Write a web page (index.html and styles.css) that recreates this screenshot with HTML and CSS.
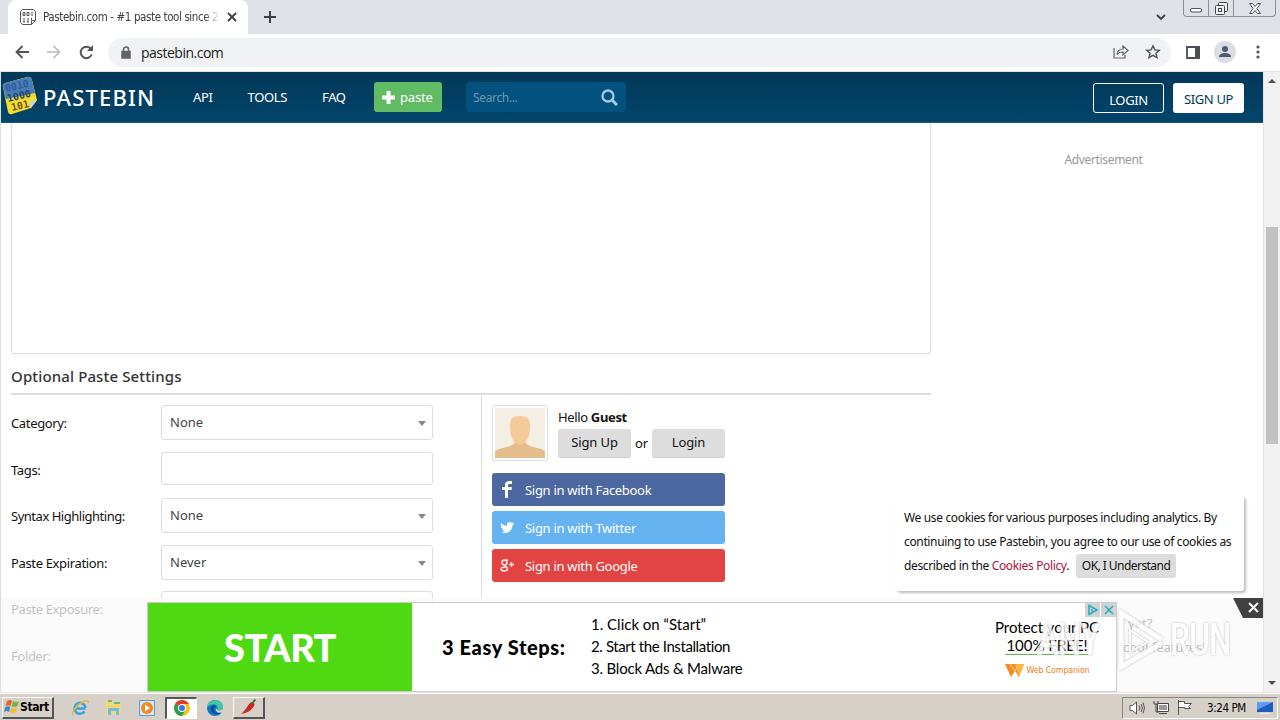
FILE: index.html
```
<!DOCTYPE html>
<html lang="en">
<head>
    <meta charset="UTF-8">
    <meta name="viewport" content="width=device-width, initial-scale=1.0">
    <title>Pastebin.com - #1 paste tool since 2002!</title>
    <link rel="stylesheet" href="styles.css">
</head>
<body>

    <!-- Browser tabs -->
    <div class="tab-bar">
        <div class="tab">
            <svg class="favicon" width="16" height="16" viewBox="0 0 16 16" fill="none" stroke="#555">
                <path d="M2.500 .5h11l2 2v9l-4 4h-9l-2-2v-11z"/>
                <path d="M3 3.500h2v3H3zM7 3.500h2v3H7zM12 3v4M4 9v4M8 9v4M11.500 9v2M3 13h2M7 13h2M15 11.500h-3.500V15"/>
            </svg>
            <span class="tab-title">Pastebin.com - #1 paste tool since 2</span>
            <svg width="10" height="10" viewBox="0 0 10 10" stroke="#3c4043" stroke-width="1.800"><path d="M1 1l8 8M9 1L1 9"/></svg>
        </div>
        <svg class="new-tab" width="12" height="12" viewBox="0 0 12 12" stroke="#3c4043" stroke-width="2"><path d="M6 0v12M0 6h12"/></svg>
        <svg class="tab-search" width="10" height="7" viewBox="0 0 10 7" fill="none" stroke="#3c4043" stroke-width="1.800"><path d="M1 1l4 4 4-4"/></svg>
        <div class="window-buttons">
            <span class="win-min"><svg width="13" height="5" viewBox="0 0 13 5" fill="#fff" stroke="#555"><rect x=".5" y=".5" width="11" height="3.500" rx="1.500"/></svg></span>
            <span class="win-max"><svg width="13" height="13" viewBox="0 0 13 13" fill="#eef0f3" stroke="#444"><rect x="3.500" y=".5" width="9" height="9" rx="1"/><rect x=".5" y="3.500" width="9" height="9" rx="1"/><rect x="3.500" y="6.500" width="3" height="3"/></svg></span>
            <span class="win-close"><svg width="12" height="11" viewBox="0 0 12 11" fill="#fff" stroke="#555"><path d="M.5.5h3L6 3.500 8.500.5h3L8 5.500l3.500 5h-3L6 7.500l-2.500 3h-3L4 5.500z"/></svg></span>
        </div>
    </div>

    <!-- Address bar -->
    <div class="toolbar">
        <svg width="14" height="14" viewBox="0 0 14 14" fill="none" stroke="#505357" stroke-width="1.900"><path d="M14 7H1.500M7.500 1l-6 6 6 6"/></svg>
        <svg class="forward" width="14" height="14" viewBox="0 0 14 14" fill="none" stroke="#b9bbbe" stroke-width="1.700"><path d="M0 7h12.500M6.500 1l6 6-6 6"/></svg>
        <svg class="reload" width="15" height="15" viewBox="0 0 15 15" fill="none" stroke="#505357" stroke-width="2"><path d="M12.700 9.500A5.700 5.700 0 1 1 11.500 3.500"/><path d="M14 0v6H8z" fill="#505357" stroke="none"/></svg>
        <div class="address">
            <svg width="10" height="13" viewBox="0 0 10 13" fill="none" stroke="#5f6368" stroke-width="1.500"><rect x="1" y="5.500" width="8" height="6.500" fill="#5f6368"/><path d="M2.500 5V3.500a2.500 2.500 0 0 1 5 0V5"/></svg>
            <span class="url">pastebin.com</span>
            <svg class="share" width="16" height="14" viewBox="0 0 16 14" fill="none" stroke="#5f6368" stroke-width="1.200"><path d="M1 3v10h11v-3M4 9.500C4.500 6 6.500 4 10 4V1l5 4.500L10 10V7C7.500 7 5.500 7.500 4 9.500z"/></svg>
            <svg width="16" height="16" viewBox="0 0 16 16" fill="none" stroke="#505357" stroke-width="1.400"><path d="M8 1.800l1.900 4.100 4.400.4-3.300 3 1 4.300-4-2.300-4 2.300 1-4.300-3.300-3 4.400-.4z"/></svg>
        </div>
        <svg class="side-panel" width="14" height="13" viewBox="0 0 14 13"><path d="M1 1h12v11H1z" fill="none" stroke="#4b4e52" stroke-width="1.800"/><path d="M9 1h5v11H9z" fill="#4b4e52"/></svg>
        <svg class="profile" width="22" height="22" viewBox="0 0 22 22"><circle cx="11" cy="11" r="11" fill="#dadde2"/><circle cx="11" cy="8" r="3" fill="#4c5a75"/><path d="M5 16c0-3 3-4 6-4s6 1 6 4z" fill="#4c5a75"/></svg>
        <svg class="menu-dots" width="4" height="14" viewBox="0 0 4 14" fill="#505357"><circle cx="2" cy="2" r="1.600"/><circle cx="2" cy="7" r="1.600"/><circle cx="2" cy="12" r="1.600"/></svg>
    </div>

    <div class="viewport">
        <div class="page">
            <header class="header">
                <svg class="logo" width="38" height="40" viewBox="0 0 38 40">
                    <path d="M2 11Q1 8 4 7L26 1q4-1 5 3l5 20-6 8-19 6q-3 1-4-2z" fill="#f3dc2c"/>
                    <path d="M2 11Q1 8 4 7L26 1q4-1 5 3l3 13L5 23z" fill="#4a7cba"/>
                    <path d="M36 24l-8 2 2 6z" fill="#c9d3d5"/>
                    <g class="logo-digits">
                        <text x="5" y="16" transform="rotate(-13 5 16)" fill="#315e96">0010</text>
                        <text x="7" y="26" transform="rotate(-13 7 26)" fill="#25486b">1000</text>
                        <text x="11" y="35" transform="rotate(-13 11 35)" fill="#6b551a">101</text>
                    </g>
                </svg>
                <span class="brand">PASTEBIN</span>
                <nav class="nav">
                    <a>API</a>
                    <a>TOOLS</a>
                    <a>FAQ</a>
                </nav>
                <a class="paste-btn">
                    <svg width="13" height="13" viewBox="0 0 13 13" stroke="#fff" stroke-width="4"><path d="M6.500 0v13M0 6.500h13"/></svg>
                    <span>paste</span>
                </a>
                <div class="search">
                    <span>Search...</span>
                    <svg width="17" height="17" viewBox="0 0 17 17" fill="none" stroke="#a3cbe3"><circle cx="7" cy="7" r="5.500" stroke-width="2.300"/><path d="M11 11l5 5" stroke-width="3"/></svg>
                </div>
                <a class="head-btn login">LOGIN</a>
                <a class="head-btn signup">SIGN UP</a>
            </header>

            <div class="content">
                <div class="main">
                    <div class="paste-text"></div>
                    <h2>Optional Paste Settings</h2>
                    <div class="columns">
                        <div class="settings">
                            <div class="row"><label>Category:</label><div class="select">None</div></div>
                            <div class="row"><label>Tags:</label><div class="select input"></div></div>
                            <div class="row"><label class="long">Syntax Highlighting:</label><div class="select">None</div></div>
                            <div class="row"><label>Paste Expiration:</label><div class="select">Never</div></div>
                            <div class="row"><label>Paste Exposure:</label><div class="select"></div></div>
                            <div class="row"><label>Folder:</label></div>
                        </div>
                        <div class="account">
                            <div class="guest">
                                <div class="avatar">
                                    <svg width="50" height="50" viewBox="0 0 50 50"><path d="M0 0h50v50H0z" fill="#f5eee4"/><path d="M0 50v-6c1-4 12-4 17-7 2-1 3-2 3-6h10c0 4 1 5 3 6 5 3 16 3 17 7v6z" fill="#e5bc8c"/><path d="M15 19c-1-8 3-11 10-11s11 3 10 11c0 9-3 17-10 18-7-1-10-9-10-18z" fill="#f2cb98"/></svg>
                                </div>
                                <div>
                                    <p class="hello">Hello <b>Guest</b></p>
                                    <div class="guest-btns"><a class="grey-btn">Sign Up</a><span>or</span><a class="grey-btn">Login</a></div>
                                </div>
                            </div>
                            <a class="social facebook">
                                <svg width="30" height="33" viewBox="0 0 30 33" fill="#fff"><path d="M13 25v-8h-3v-3h3v-2c0-3 2-4 5-4h2v3h-2c-1 0-2 0-2 1v2h4l-.5 3H16v8z"/></svg>
                                <span>Sign in with Facebook</span>
                            </a>
                            <a class="social twitter">
                                <svg width="30" height="33" viewBox="0 0 30 33" fill="#fff"><path d="M9 12c2 2 4 3 6 3-.5-4 3-5 5-3l2-.6-1 1.600 1 .2-1.500 1.500C20 20 15 24 9 21c1.500 0 3-.3 4-1-1.500 0-2.500-1-3-2h1.500c-1.500-.5-2.500-1.500-2.500-3l1 .3c-1.500-1-1.500-2-1-3.300z"/></svg>
                                <span>Sign in with Twitter</span>
                            </a>
                            <a class="social google">
                                <svg width="30" height="33" viewBox="0 0 30 33" fill="none" stroke="#fbe3e2" stroke-width="1.500"><circle cx="12.500" cy="13.500" r="2.500"/><path d="M12 11h4M12.500 16c0 1.500 3 1.500 3 4s-6.500 2.500-6.500 0c0-2 3-2 5-2M17 15.500h5M19.500 13v5"/></svg>
                                <span>Sign in with Google</span>
                            </a>
                        </div>
                    </div>
                </div>
                <aside class="sidebar">Advertisement</aside>
            </div>

            <div class="cookies">
                <span>We use cookies for various purposes including analytics. By</span><br>
                <span>continuing to use Pastebin, you agree to our use of cookies as</span><br>
                <span>described in the <a>Cookies Policy</a>.</span> <span class="ok">OK, I Understand</span>
            </div>

            <!-- Bottom ad -->
            <div class="ad-strip">
                <div class="ad">
                    <div class="ad-start">START</div>
                    <div class="ad-title">3 Easy Steps:</div>
                    <div class="ad-steps">
                        <div>1. Click on “Start”</div>
                        <div class="install">2. Start the Installation</div>
                        <div class="block">3. Block Ads &amp; Malware</div>
                    </div>
                    <div class="ad-brand">
                        <div class="protect">Protect your PC</div>
                        <div class="free">100% FREE!</div>
                        <div class="companion">
                            <svg width="19" height="13" viewBox="0 0 19 13"><path d="M0 0h19l-5 13-4-6-4 6z" fill="#f68b1e"/><path d="M10 0h9l-5 13z" fill="#fdb53c"/><path d="M5 0l5 7 3-5" fill="none" stroke="#fff" stroke-width=".6"/></svg>
                            <span>Web Companion</span>
                        </div>
                    </div>
                    <svg class="ad-choices" width="31" height="14" viewBox="0 0 31 14" fill="none" stroke="#25aab8" stroke-width="1.500"><path d="M0 0h15v14H0zM16 0h15v14H16z" fill="#cfd3d5" stroke="none"/><path d="M4 2.500l8 4.500-8 4.500zM7 6v2.500M20 3l8 8M28 3l-8 8"/></svg>
                </div>
                <span class="behind b1">yet?</span>
                <span class="behind b2">cool features!</span>
                <svg class="ad-close" width="31" height="20" viewBox="0 0 31 20"><path d="M0 0h31v20H10z" fill="#414141"/><path d="M16 5l9 9M25 5l-9 9" stroke="#fff" stroke-width="2"/></svg>
            </div>

            <div class="watermark">
                <span class="any">ANY</span>
                <svg width="52" height="64" viewBox="0 0 52 64" fill="none" stroke="#fff" stroke-width="5"><path d="M5 36V5l41 27"/><path d="M5 36v23l41-24"/><path d="M14 22v22l18-10z" stroke-width="2"/></svg>
                <span class="run">RUN</span>
            </div>
        </div>

        <div class="scrollbar">
            <svg width="8" height="4" viewBox="0 0 8 4" fill="#505050"><path d="M4 0l4 4H0z"/></svg>
            <div class="thumb"></div>
            <svg class="down" width="8" height="4" viewBox="0 0 8 4" fill="#505050"><path d="M0 0h8L4 4z"/></svg>
        </div>
    </div>

    <!-- Taskbar -->
    <div class="taskbar">
        <div class="start">
            <svg width="16" height="16" viewBox="0 0 16 16"><path d="M3 2q3-2 5 0L6.500 7q-2-1.500-5 0z" fill="#e8622c"/><path d="M9 2q3 2 6 0l-1.500 5q-3 2-6 0z" fill="#72b840"/><path d="M1.300 8q3-1.500 5 0L5 13q-2-2-5 0z" fill="#3e83d0"/><path d="M7.300 8.500q3 2 6 0L12 13q-3 2-6 0z" fill="#f6bd29"/></svg>
            <b>Start</b>
        </div>
        <svg class="ie" width="18" height="18" viewBox="0 0 18 18" fill="none"><path d="M14.500 9.500H4M13.500 12.500A5.500 5.500 0 1 1 14.500 9" stroke="#35a3dd" stroke-width="2.500"/><path d="M2 16c-2-2 3-9 8-12s8-3 7 0" stroke="#e5b93a" stroke-width="1.500"/></svg>
        <svg class="folder" width="17" height="17" viewBox="0 0 17 17"><path d="M1 2h6l1 2h8v11H1z" fill="#f4d67a"/><path d="M3 1h4v2H3zM9 3h6v2H9z" fill="#73b76b"/><path d="M3 16V9h11v7h-3v-4H6v4z" fill="#71bde1"/></svg>
        <svg class="wmp" width="16" height="16" viewBox="0 0 16 16"><path d="M.5.500h15v15H.5z" fill="#d5e7f4" stroke="#5b9dcc"/><circle cx="8" cy="8" r="6" fill="#f28a1b"/><path d="M6 4.500l5 3.500-5 3.500z" fill="#fff"/></svg>
        <div class="task active">
            <svg width="16" height="16" viewBox="0 0 16 16"><circle cx="8" cy="8" r="8" fill="#fbc116"/><path d="M8 8L1.100 4A8 8 0 0 1 14.900 4H8z" fill="#e33b2e"/><path d="M1.100 4A8 8 0 0 0 8 16l3.500-6L8 8z" fill="#27a350"/><circle cx="8" cy="8" r="4" fill="#fff"/><circle cx="8" cy="8" r="3" fill="#3b78e7"/></svg>
        </div>
        <svg class="edge" width="16" height="16" viewBox="0 0 16 16"><circle cx="8" cy="8" r="8" fill="#1675c8"/><path d="M0 7C1-2 16-2 16 7c0 4-5 4-6 2 2-3-2-6-6-4-2 1-3 1-4 2z" fill="#40c9a0"/><path d="M7 8c-1 4 3 6 7 4l-1 2C7 15 3 12 4 8c1-3 4-3 5-1z" fill="#0d4d91"/><path d="M9 8c1 3 4 3 7 1v3c-4 2-8 0-7-4z" fill="#d6d0c8"/></svg>
        <div class="task chili">
            <svg width="18" height="18" viewBox="0 0 18 18"><path d="M10 5c2-2 6 0 4 3-3 5-7 7-13 8 5-4 6-8 9-11z" fill="#c92828"/><path d="M12.500 6c0-2 1-3 3-4.500" fill="none" stroke="#3c7a2b" stroke-width="2"/></svg>
        </div>
        <div class="tray">
            <svg width="16" height="14" viewBox="0 0 16 14" fill="#fff" stroke="#555"><path d="M1 4.500h2.500l4-3.500v12l-4-3.500H1z"/><path d="M10 4.500q2 2.500 0 5M12 3q3 4 0 8M14 1.500q3 5.500 0 11" fill="none"/></svg>
            <svg width="16" height="15" viewBox="0 0 16 15" fill="#fff" stroke="#444"><path d="M4.500 3.500h11v8h-11z"/><path d="M6 5h8v5H6z" fill="#999" stroke="none"/><path d="M1 1v3h4V1M3 4v8h3M6 13.500h8" fill="none"/></svg>
            <svg width="16" height="15" viewBox="0 0 16 15" fill="#fff" stroke="#555"><path d="M1.500 0v15M1.500 1.500h6v2h7l-3 3 2 2h-6v-1h-6z"/></svg>
            <span class="clock">3:24 PM</span>
            <svg width="16" height="14" viewBox="0 0 16 14"><path d="M0 1h16v10H0z" fill="#1d5dbd"/><path d="M0 1h16L0 9z" fill="#5f9ceb"/><path d="M3 12h10v1H3z" fill="#eee"/></svg>
        </div>
    </div>

</body>
</html>
```
FILE: styles.css
```
* {
    box-sizing: border-box;
}
body {
    margin: 0;
    width: 1280px;
    height: 720px;
    overflow: hidden;
    display: flex;
    flex-direction: column;
    font-family: "Noto Sans", "Open Sans", sans-serif;
    font-size: 13px;
    letter-spacing: -0.35px;
    color: #111;
    background: #fff;
}
svg {
    flex: none;
    display: block;
}
span, a, label {
    white-space: nowrap;
}

/* Browser tabs */
.tab-bar {
    height: 34px;
    flex: none;
    display: flex;
    align-items: center;
    background: #dee1e8;
    padding-left: 8px;
}
.tab {
    width: 240px;
    height: 34px;
    display: flex;
    align-items: center;
    background: #fff;
    border-radius: 8px 8px 0 0;
    padding: 0 11px 0 12px;
    font-family: "DejaVu Sans Condensed", "DejaVu Sans", sans-serif;
    font-size: 11.5px;
}
.tab-title {
    flex: 1;
    margin: 0 8px 0 7px;
    overflow: hidden;
    letter-spacing: -0.4px;
    color: #3c4043;
    -webkit-mask-image: linear-gradient(to right, #000 162px, transparent 177px);
}
.new-tab {
    margin-left: 16px;
}
.tab-search {
    margin-left: auto;
}
.window-buttons {
    display: flex;
    align-self: flex-start;
    height: 17px;
    width: 93px;
    margin: 0 4px 0 17px;
    border: 1px solid #8c8f96;
    border-top: 0;
    border-radius: 0 0 4px 4px;
}
.window-buttons span {
    display: flex;
    align-items: center;
    justify-content: center;
    border-right: 1px solid #8c8f96;
}
.win-min {
    width: 25px;
    padding-top: 4px;
}
.win-max {
    width: 25px;
}
.window-buttons .win-close {
    flex: 1;
    border: 0;
}

/* Address bar */
.toolbar {
    height: 38px;
    flex: none;
    display: flex;
    align-items: center;
    padding: 0 20px 1px 15px;
    border-bottom: 1px solid #dfe2e6;
}
.forward {
    margin-left: 18px;
}
.reload {
    margin: 0 14px 0 18px;
}
.address {
    width: 1064px;
    height: 29px;
    display: flex;
    align-items: center;
    padding: 0 10px 0 13px;
    border-radius: 15px;
    background: #f0f2f4;
}
.url {
    margin-left: 10px;
    font-family: "Open Sans", sans-serif;
    font-size: 14px;
    letter-spacing: -0.5px;
    color: #222;
}
.share {
    margin: 0 16px 0 auto;
}
.side-panel {
    margin-left: 15px;
}
.profile {
    margin: 0 20px 0 14px;
}

.viewport {
    height: 620px;
    flex: none;
    display: flex;
}
.page {
    position: relative;
    width: 1264px;
    height: 620px;
    overflow: hidden;
    border-left: 1px solid #ddd;
    border-right: 1px solid #e4e4e4;
}

/* Site header */
.header {
    height: 51px;
    margin: 0 -1px;
    display: flex;
    align-items: center;
    padding: 0 20px 0 1px;
    background: linear-gradient(#023859, #02456b);
    border-bottom: 1px solid #1c567a;
    color: #fff;
}
.logo {
    margin-top: -2px;
}
.logo-digits {
    font-family: "DejaVu Sans Mono", monospace;
    font-size: 10px;
    font-weight: bold;
    letter-spacing: 0;
}
.brand {
    width: 112px;
    margin-left: 4px;
    font-size: 22px;
    font-weight: 500;
    letter-spacing: 1.2px;
}
.nav {
    display: flex;
    width: 219px;
    padding-left: 38px;
}
.nav a {
    margin-right: 35px;
}
.paste-btn {
    width: 68px;
    height: 30px;
    display: flex;
    align-items: center;
    padding-left: 8px;
    gap: 5px;
    border-radius: 3px;
    background: #61bb65;
    letter-spacing: -0.2px;
}
.search {
    width: 160px;
    height: 30px;
    margin-left: 24px;
    padding: 0 8px 0 7px;
    display: flex;
    align-items: center;
    justify-content: space-between;
    border-radius: 3px;
    background: #02517f;
    color: #6f97b0;
    font-size: 12px;
}
.head-btn {
    width: 71px;
    height: 30px;
    margin-top: 1px;
    line-height: 32px;
    text-align: center;
    border-radius: 3px;
}
.login {
    margin-right: 9px;
    margin-left: auto;
    border: 1px solid #fff;
}
.signup {
    background: #fff;
    color: #023859;
}

/* Paste form */
.content {
    display: flex;
    padding-left: 10px;
}
.main {
    width: 920px;
}
.paste-text {
    height: 231px;
    border: 1px solid #ddd;
    border-top: 0;
    border-radius: 0 0 3px 3px;
}
h2 {
    height: 41px;
    margin: 0;
    padding-top: 12px;
    border-bottom: 2px solid #ddd;
    font-size: 15px;
    font-weight: 500;
    line-height: 21px;
    letter-spacing: 0.13px;
    color: #333;
}
.columns {
    display: flex;
    height: 300px;
}
.settings {
    width: 471px;
    padding-top: 10px;
    border-right: 1px solid #ddd;
}
.row {
    display: flex;
    height: 46.6px;
}
.row label {
    width: 150px;
    line-height: 37px;
}
.row .long {
    letter-spacing: -0.48px;
}
.select {
    position: relative;
    width: 272px;
    height: 35px;
    padding-left: 8px;
    line-height: 33px;
    letter-spacing: 0;
    border: 1px solid #ddd;
    border-radius: 3px;
    color: #444;
}
.select::after {
    content: "";
    position: absolute;
    right: 6px;
    top: 15px;
    border: 4px solid transparent;
    border-top: 5px solid #888;
    border-bottom: 0;
}
.select.input {
    height: 33px;
}
.select.input::after {
    display: none;
}
.account {
    width: 243px;
    padding: 10px 0 0 10px;
}
.guest {
    display: flex;
    height: 68px;
}
.avatar {
    width: 56px;
    height: 56px;
    margin-right: 10px;
    padding: 2px;
    border: 1px solid #ddd;
    border-radius: 3px;
}
.hello {
    margin: 3px 0 3px;
    line-height: 18px;
}
.guest-btns {
    display: flex;
    width: 167px;
    align-items: center;
    justify-content: space-between;
    letter-spacing: -0.1px;
}
.guest-btns span {
    margin-top: -2px;
}
.grey-btn {
    width: 73px;
    height: 29px;
    line-height: 27px;
    text-align: center;
    border-radius: 3px;
    background: #ddd;
    border-bottom: 1px solid #ccc;
}
.social {
    display: flex;
    align-items: center;
    height: 33px;
    margin-bottom: 5px;
    border-radius: 3px;
    color: #fff;
}
.social span {
    margin-left: 3px;
    letter-spacing: -0.3px;
}
.facebook {
    background: #4d68a1;
}
.twitter {
    background: #65b3f0;
}
.google {
    background: #e24444;
}
.sidebar {
    flex: 1;
    padding: 28px 0 0 13px;
    text-align: center;
    font-size: 12px;
    color: #999;
}

/* Cookie notice */
.cookies {
    position: absolute;
    left: 895px;
    top: 424px;
    width: 348px;
    height: 95px;
    padding: 10px 8px;
    line-height: 24px;
    font-size: 12px;
    background: #fff;
    border-radius: 3px;
    box-shadow: 2px 2px 3px #bbb;
}
.cookies a {
    color: #b01040;
}
.ok {
    display: inline-block;
    height: 24px;
    margin-left: 4px;
    padding: 0 6px;
    border-radius: 3px;
    background: #ddd;
    letter-spacing: -0.55px;
}

/* Bottom ad */
.ad-strip {
    position: absolute;
    left: -1px;
    top: 526px;
    width: 1264px;
    height: 94px;
    padding: 4px 0 0 147px;
    background: rgba(250, 250, 250, 0.75);
}
.ad {
    position: relative;
    width: 970px;
    height: 90px;
    display: flex;
    align-items: center;
    background: #fff;
    border: 1px solid #ccc;
    font-family: Lato, sans-serif;
    letter-spacing: 0;
    color: #000;
}
.ad > div {
    flex: none;
}
.ad-start {
    width: 264px;
    height: 88px;
    line-height: 88px;
    text-align: center;
    background: #4fd913;
    color: #fff;
    font-size: 38px;
    font-weight: 900;
    letter-spacing: -0.6px;
}
.ad-title {
    width: 179px;
    padding-left: 30px;
    font-size: 20px;
    font-weight: 900;
    letter-spacing: 0.6px;
    white-space: nowrap;
}
.ad-steps {
    width: 391px;
    padding-bottom: 3px;
    line-height: 22px;
    font-size: 15px;
}
.install {
    letter-spacing: -0.4px;
}
.block {
    letter-spacing: -0.2px;
}
.ad-brand {
    width: 130px;
    padding-top: 3px;
    text-align: center;
    font-size: 15px;
    line-height: 18px;
}
.protect {
    white-space: nowrap;
}
.free {
    width: 84px;
    margin: 0 auto;
    border-bottom: 1px solid #62b34b;
    white-space: nowrap;
}
.companion {
    display: flex;
    align-items: center;
    justify-content: center;
    gap: 3px;
    margin-top: 7px;
    font-family: "DejaVu Sans", sans-serif;
    font-size: 8px;
    letter-spacing: -0.2px;
    color: #f28022;
}
.ad-choices {
    position: absolute;
    right: 0;
    top: 0;
}
.behind {
    position: absolute;
    color: #c0c0c0;
    letter-spacing: 0;
}
.b1 {
    left: 1128px;
    top: 16px;
}
.b2 {
    left: 1123px;
    top: 40px;
}
.ad-close {
    position: absolute;
    right: 0;
    top: 0;
}
.watermark {
    position: absolute;
    left: 1036px;
    top: 536px;
    width: 200px;
    height: 64px;
    display: flex;
    align-items: center;
    color: #fff;
    opacity: 0.8;
    font-family: Roboto, sans-serif;
    font-size: 45px;
    font-weight: 500;
    line-height: 64px;
    letter-spacing: -1px;
    filter: drop-shadow(0 0 1px #aaa);
}
.watermark span {
    width: 79px;
    transform: scaleX(0.73);
    transform-origin: left;
}
.watermark .run {
    transform: scaleX(0.7);
    margin-left: 2px;
}

.scrollbar {
    width: 16px;
    display: flex;
    flex-direction: column;
    align-items: center;
    padding: 7px 0;
    background: #f1f1f1;
}
.thumb {
    width: 12px;
    height: 217px;
    margin-top: 144px;
    background: #c1c1c1;
}
.down {
    margin-top: auto;
}

/* Taskbar */
.taskbar {
    height: 28px;
    flex: none;
    display: flex;
    align-items: center;
    padding: 2px 2px 0;
    background: #d6d0c8;
    border-top: 1px solid #e8e6e0;
    box-shadow: inset 0 1px #fff;
    font-family: "DejaVu Sans Condensed", sans-serif;
    font-size: 12px;
    color: #000;
}
.start {
    width: 52px;
    height: 22px;
    display: flex;
    align-items: center;
    padding-left: 1px;
    border: 1px solid #fff;
    border-right: 2px solid #555;
    border-bottom: 2px solid #555;
    letter-spacing: -0.4px;
}
.ie {
    margin-left: 17px;
}
.folder {
    margin-left: 16px;
}
.wmp {
    margin-left: 17px;
}
.task {
    width: 32px;
    height: 22px;
    display: flex;
    align-items: center;
    justify-content: center;
    border: 1px solid #fff;
    border-right: 2px solid #555;
    border-bottom: 2px solid #555;
}
.task.active {
    margin: 0 10px;
    background: #fff;
    border: 1px solid #fff;
    border-top: 2px solid #555;
    border-left: 2px solid #555;
}
.chili {
    margin-left: 10px;
}
.tray {
    width: 156px;
    height: 22px;
    margin-left: auto;
    display: flex;
    align-items: center;
    gap: 8px;
    padding: 0 2px 0 6px;
    border: 1px solid #888;
    border-right-color: #fff;
    border-bottom-color: #fff;
}
.clock {
    width: 42px;
    margin-left: 6px;
    font-size: 11.5px;
    letter-spacing: -0.4px;
}
```
